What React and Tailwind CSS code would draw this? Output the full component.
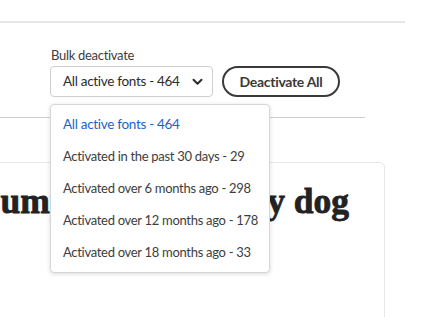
import React from "react";

const items = [
  "Activated in the past 30 days - 29",
  "Activated over 6 months ago - 298",
  "Activated over 12 months ago - 178",
  "Activated over 18 months ago - 33",
];

export default function App() {
  return (
    <div className="relative w-[422px] h-[317px] overflow-hidden bg-white whitespace-nowrap tracking-[-0.3px]" style={{ fontFamily: "Lato, sans-serif" }}>
      <div className="pt-[21px]">
        <div className="w-[405px] h-[2px] bg-[#e6e6e6]" />
        <div className="relative pl-[50px] pt-[23px]">
          <div className="text-[13px] leading-[18px] text-[#3d3d3d] pl-[1px]">Bulk deactivate</div>
          <div className="flex items-center gap-[9px] mt-[2px]">
            <div className="w-[163px] h-[31px] border border-[#cfcfcf] rounded-[4px] flex items-center pl-[12px] text-[13.5px] text-[#2c2c2c]">
              <span>All active fonts - 464</span>
              <svg className="ml-[12px]" width="11" height="8" viewBox="0 0 11 8" fill="none"><path d="M1.5 1.8 L5.5 5.8 L9.5 1.8" stroke="#2c2c2c" strokeWidth="2" strokeLinecap="round" strokeLinejoin="round" /></svg>
            </div>
            <div className="w-[118px] h-[31px] -mt-[1px] border-2 border-[#3a3a3a] rounded-full flex items-center justify-center text-[14px] font-bold text-[#3a3a3a]">
              Deactivate All
            </div>
          </div>
          <div className="absolute left-[50px] top-[81px] w-[220px] h-[169px] bg-white border border-[#d6d6d6] rounded-[4px] shadow-[0_1px_4px_rgba(0,0,0,0.15)] z-10 pt-[9px] pl-[12px]">
            <div className="h-[21px] leading-[21px] text-[13.5px] text-[#1866c7]">All active fonts - 464</div>
            {items.map((t) => (
              <div key={t} className="h-[21px] mt-[11px] leading-[21px] text-[13px] text-[#3d3d3d]">{t}</div>
            ))}
          </div>
        </div>
        <div className="w-[365px] h-[1px] bg-[#d0d0d0] mt-[20px]" />
        <div className="mt-[44px] ml-[-200px] w-[585px] h-[200px] border border-[#e6e6e6] rounded-[5px] overflow-hidden">
          <div className="flex justify-end pt-[16px] pr-[35px]">
            <div className="shrink-0 text-[35.5px] leading-[44px] font-bold text-[#222] tracking-normal [-webkit-text-stroke:0.8px_#222]" style={{ fontFamily: "'Liberation Serif', serif" }}>
              The quick brown fox jumps over the lazy dog
            </div>
          </div>
        </div>
      </div>
    </div>
  );
}
